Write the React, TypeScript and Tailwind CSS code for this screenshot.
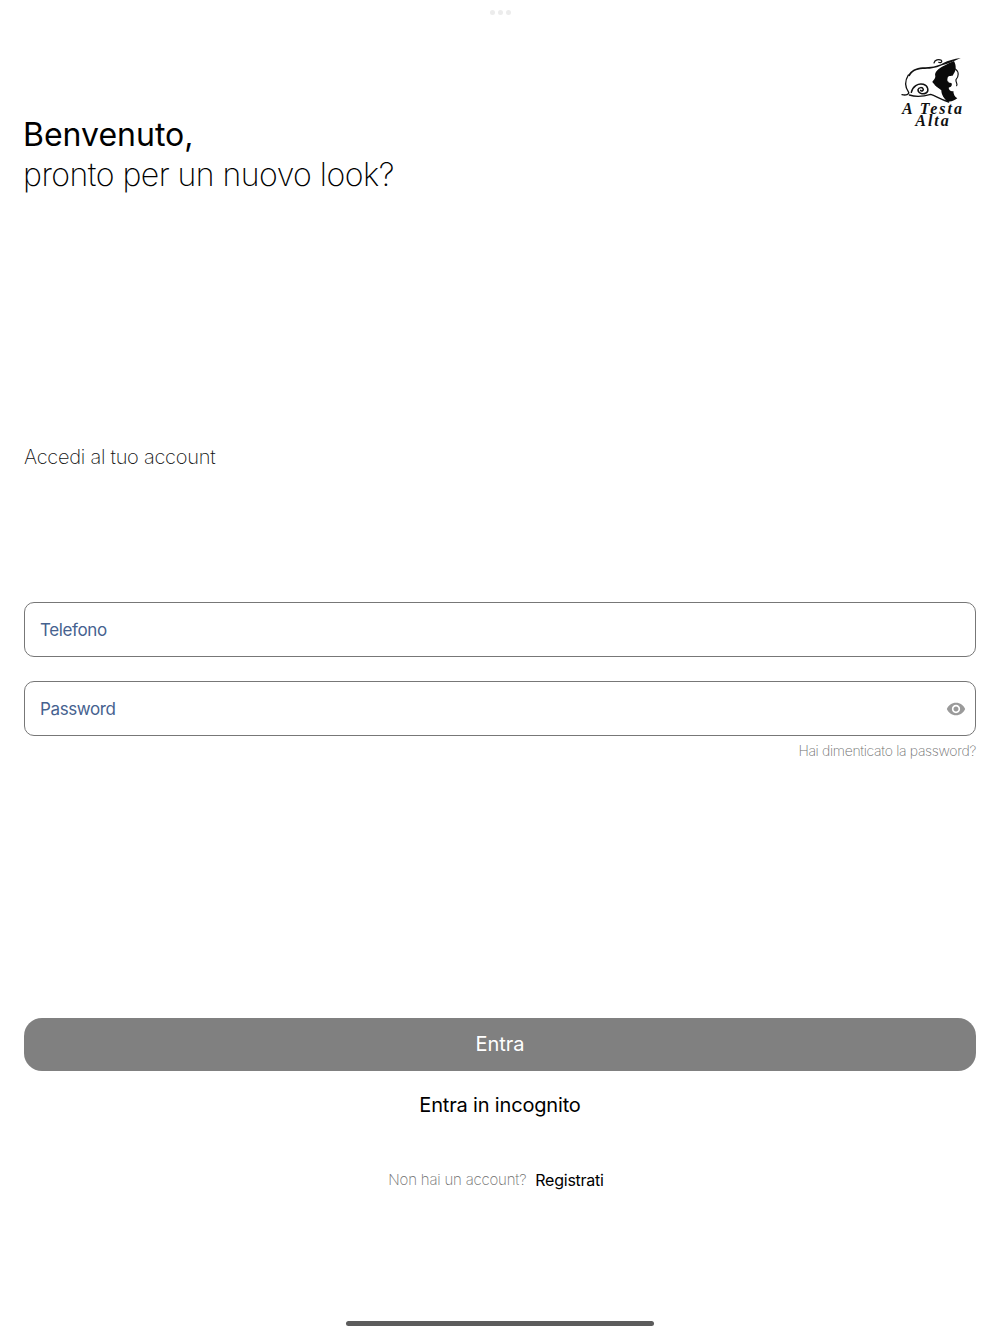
const font = { fontFamily: 'Inter, sans-serif' };

function Logo() {
    return (
        <div className="flex w-[70px] flex-col items-center">
            <svg viewBox="0 0 210 150" className="h-[50px] w-[70px]">
                {/* top line of the hair */}
                <path d="M30 62 C38 46 54 38 74 37 C98 37 118 34 136 24 C150 17 168 12 188 9 C168 18 150 26 132 31 C112 41 92 42 74 42 C54 43 42 50 35 64 Z" fill="#111" />
                <path d="M108 24 C110 15 122 11 130 16 C134 20 128 25 122 22" fill="none" stroke="#111" strokeWidth="3.5" strokeLinecap="round" />
                {/* left side and bottom */}
                <path d="M31 60 C20 78 22 98 32 112 C34 118 24 122 12 119" fill="none" stroke="#111" strokeWidth="4" strokeLinecap="round" />
                <path d="M34 120 C52 126 78 124 98 118 C112 122 126 132 152 141" fill="none" stroke="#111" strokeWidth="4" strokeLinecap="round" />
                {/* spiral */}
                <path d="M40 112 C44 94 60 84 76 88 C90 92 94 108 84 114 C74 120 60 114 60 104 C62 96 74 96 76 103 C76 108 70 110 68 106" fill="none" stroke="#111" strokeWidth="4.5" strokeLinecap="round" />
                {/* face profile */}
                <path
                    d="M168 18 C150 26 128 36 118 46 C112 52 110 58 112 64 C112 70 108 74 103 80 C104 85 110 86 110 90 C116 96 124 100 130 106 C130 116 134 126 146 138 C156 142 168 138 178 130 C170 126 166 116 166 108 C160 112 152 104 152 98 C160 96 164 90 160 84 C150 82 146 72 150 66 C156 60 166 66 166 58 C174 48 176 34 168 18 Z"
                    fill="#0a0a0a"
                />
                <path d="M158 72 C154 68 148 72 150 78 C152 84 160 82 160 76" fill="none" stroke="#fff" strokeWidth="3" />
                <path d="M172 42 C184 50 182 66 174 74 C172 82 180 86 176 92" fill="none" stroke="#111" strokeWidth="3.5" strokeLinecap="round" />
            </svg>
            <div
                className="mt-[-2px] text-center text-[16px] font-bold italic leading-[12px] tracking-[2px] text-[#111]"
                style={{ fontFamily: '"Liberation Serif", serif' }}
            >
                <div className="whitespace-nowrap">A Testa</div>
                <div>Alta</div>
            </div>
        </div>
    );
}

function Field({ label, eye }: { label: string; eye?: boolean }) {
    return (
        <div className="flex h-[55px] items-center justify-between rounded-[10px] border border-[#777777] bg-white pl-[15px] pr-[9px]">
            <span className="pt-[2px] text-[17px] tracking-[-0.38px] text-[#46628f]">{label}</span>
            {eye && (
                <svg viewBox="0 0 24 24" className="h-[20px] w-[20px]" fill="#9a9a9a">
                    <path d="M12 4.5C7 4.5 2.73 7.61 1 12c1.73 4.39 6 7.5 11 7.5s9.27-3.11 11-7.5c-1.73-4.39-6-7.5-11-7.5zM12 17c-2.76 0-5-2.24-5-5s2.24-5 5-5 5 2.24 5 5-2.24 5-5 5zm0-8c-1.66 0-3 1.34-3 3s1.34 3 3 3 3-1.34 3-3-1.34-3-3-3z" />
                </svg>
            )}
        </div>
    );
}

export default function App() {
    return (
        <div className="flex h-[1334px] w-[1000px] flex-col bg-white px-6 text-black" style={font}>
            <div className="flex justify-center gap-[3px] pt-[10px]">
                <span className="h-[5px] w-[5px] rounded-full bg-[#ececec]" />
                <span className="h-[5px] w-[5px] rounded-full bg-[#ececec]" />
                <span className="h-[5px] w-[5px] rounded-full bg-[#ececec]" />
            </div>

            <div className="mt-[40px] flex items-start justify-between pr-[8px]">
                <h1 className="ml-[-1px] mt-[60px] text-[32px] leading-[40px]">
                    <div className="font-normal">Benvenuto,</div>
                    <div className="font-extralight tracking-[-0.52px]">pronto per un nuovo look?</div>
                </h1>
                <Logo />
            </div>

            <p className="mt-[248px] text-[20px] font-extralight leading-[28px] tracking-[-0.26px] text-[#111]">Accedi al tuo account</p>

            <div className="mt-[131px] flex flex-col gap-[24px]">
                <Field label="Telefono" />
                <Field label="Password" eye />
            </div>
            <p className="mt-[5px] text-right text-[14px] font-extralight leading-[20px] tracking-[-0.32px] text-[#707070]">Hai dimenticato la password?</p>

            <button className="mt-[257px] h-[53px] rounded-[18px] bg-[#808080] pb-[2px] text-[20px] text-white">Entra</button>
            <button className="mt-[19px] h-[28px] text-[20px] tracking-[-0.17px] text-black">Entra in incognito</button>

            <div className="mt-[50px] flex justify-center gap-[9px] pr-[8px] leading-[24px]">
                <span className="text-[15px] font-extralight tracking-[-0.2px] text-[#707070]">Non hai un account?</span>
                <span className="text-[16px] tracking-[-0.25px] text-black">Registrati</span>
            </div>

            <div className="mt-auto mb-[8px] h-[5px] w-[308px] self-center rounded-full bg-[#5c5c5c]" />
        </div>
    );
}
